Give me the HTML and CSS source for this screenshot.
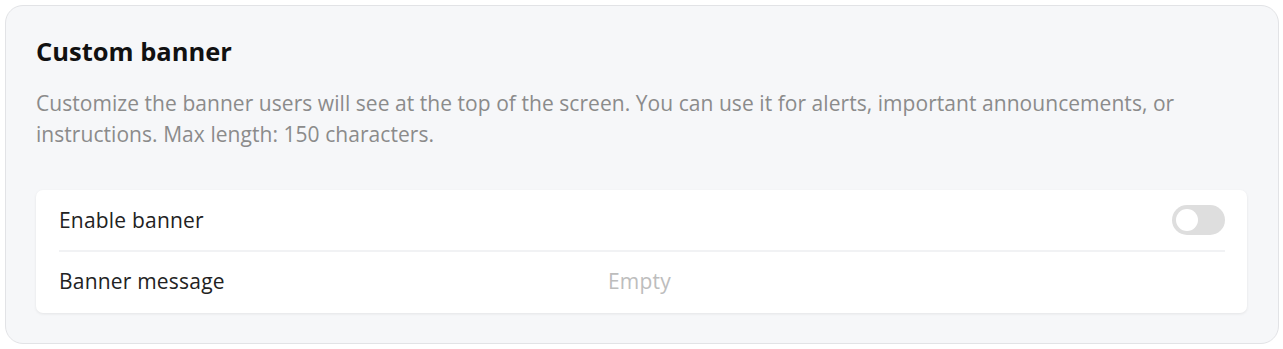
FILE: index.html
```html
<!DOCTYPE html>
<html lang="en">
<head>
    <meta charset="UTF-8">
    <meta name="viewport" content="width=device-width, initial-scale=1.0">
    <title>Custom banner</title>
    <link rel="stylesheet" href="styles.css">
</head>
<body>
    <div class="settings-card">
        <h2 class="card-title">Custom banner</h2>
        <p class="card-desc">Customize the banner users will see at the top of the screen. You can use it for alerts, important announcements, or instructions. Max length: 150 characters.</p>

        <div class="field-list">
            <div class="field-row">
                <span class="field-label">Enable banner</span>
                <label class="toggle">
                    <input type="checkbox">
                    <span class="toggle-knob"></span>
                </label>
            </div>
            <div class="field-row">
                <span class="field-label">Banner message</span>
                <span class="field-value">Empty</span>
            </div>
        </div>
    </div>
</body>
</html>
```

FILE: styles.css
```css
body {
    margin: 0;
    padding: 5px 4px 5px 5px;
    background-color: #ffffff;
    font-family: "Open Sans", Lato, sans-serif;
}
.settings-card {
    background-color: #f6f7f9;
    border: 1px solid #e2e3e6;
    border-radius: 18px;
    padding: 29px 31px 30px 30px;
    height: 339px;
    box-sizing: border-box;
}
.card-title {
    margin: 0;
    font-size: 25.5px;
    font-weight: 700;
    color: #111;
    line-height: 32px;
}
.card-desc {
    margin: 21px 0 0;
    font-size: 21px;
    letter-spacing: 0.05px;
    line-height: 31px;
    color: #8b8b8b;
}
.field-list {
    margin-top: 40px;
    background-color: white;
    border-radius: 7px;
    box-shadow: 0 1px 3px rgba(0,0,0,0.08);
    padding: 0 22px 0 23px;
}
.field-row {
    display: flex;
    align-items: center;
    height: 60px;
    font-size: 21px;
    letter-spacing: 0.2px;
    color: #222;
}
.field-row + .field-row {
    border-top: 2px solid #f1f2f4;
    height: 63px;
    padding-bottom: 4px;
    box-sizing: border-box;
}
.field-label {
    width: 549px;
}
.field-value {
    color: #bdbdbd;
}
.toggle {
    margin-left: auto;
    position: relative;
    width: 53px;
    height: 30px;
    cursor: pointer;
}
.toggle input {
    display: none;
}
.toggle-knob {
    display: block;
    width: 100%;
    height: 100%;
    border-radius: 15px;
    background-color: #dedede;
}
.toggle-knob::after {
    content: "";
    position: absolute;
    left: 4px;
    top: 4px;
    width: 22px;
    height: 22px;
    border-radius: 50%;
    background-color: white;
}
```
